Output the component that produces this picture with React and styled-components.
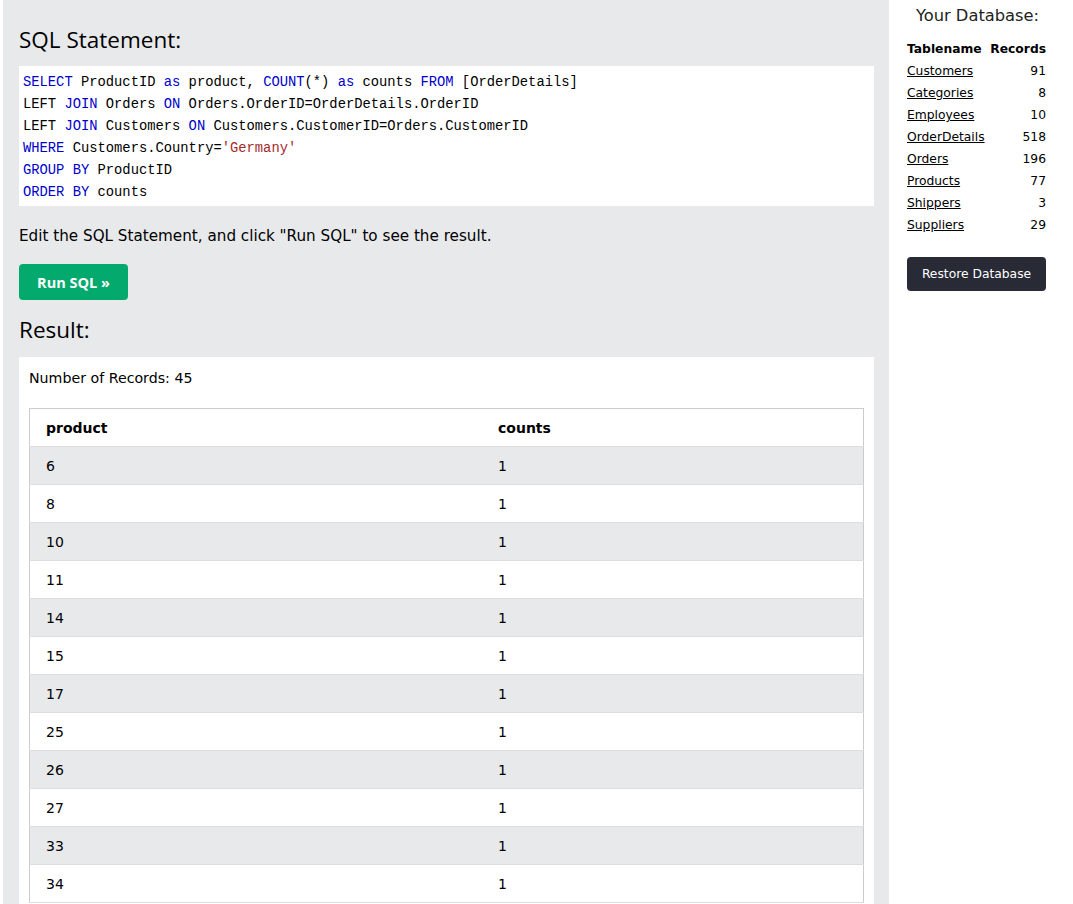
import React from 'react';
import styled, { createGlobalStyle } from 'styled-components';

const GlobalStyle = createGlobalStyle`
  html, body {
    margin: 0;
    padding: 0;
    background: #fff;
  }
  body {
    font-family: "DejaVu Sans", Verdana, sans-serif;
    color: #000;
    overflow: hidden;
  }
`;

const Page = styled.div`
  display: flex;
  height: 904px;
  padding-left: 3px;
  background: #fff;
`;

const Main = styled.div`
  width: 886px;
  flex-shrink: 0;
  background: #e7e9eb;
  padding: 0 15px 0 16px;
  box-sizing: border-box;
  overflow: hidden;
`;

const Heading = styled.h2`
  font-family: "Open Sans", "Segoe UI", sans-serif;
  font-weight: 400;
  font-size: 22.5px;
  line-height: 30px;
  margin: ${p => p.$top || 0}px 0 ${p => p.$bottom || 0}px;
  color: #000;
`;

const CodeBox = styled.div`
  background: #fff;
  padding: 6px 4px 2px;
  font-family: "Liberation Mono", "DejaVu Sans Mono", monospace;
  font-size: 13.8px;
  line-height: 22px;
  white-space: pre;
`;

const Kw = styled.span`
  color: mediumblue;
`;

const Str = styled.span`
  color: brown;
`;

const Note = styled.p`
  font-size: 15.2px;
  margin: 21px 0 0;
  line-height: 18px;
`;

const RunButton = styled.button`
  margin-top: 19px;
  display: block;
  width: 109px;
  height: 36px;
  border: none;
  border-radius: 4px;
  background: #04aa6d;
  color: #fff;
  font-family: "Open Sans", "Segoe UI", sans-serif;
  font-weight: 700;
  font-size: 14.5px;
  padding: 0;
`;

const ResultBox = styled.div`
  background: #fff;
  padding: 10px 10px;
`;

const Count = styled.div`
  font-size: 14.2px;
  line-height: 22px;
  margin-bottom: 19px;
`;

const DataTable = styled.table`
  width: 100%;
  border-collapse: collapse;
  border: 1px solid #ccc;
  font-size: 14px;
`;

const Th = styled.th`
  text-align: left;
  font-weight: 700;
  padding: 0 16px;
  height: 37px;
  border-bottom: 1px solid #ddd;
  width: ${p => p.$w || 'auto'};
`;

const Row = styled.tr`
  background: ${p => (p.$odd ? '#e7e9eb' : '#fff')};
  border-bottom: 1px solid #ddd;
`;

const Td = styled.td`
  padding: 0 16px;
  height: 37px;
`;

const Side = styled.div`
  flex: 1;
  padding: 0 27px 0 18px;
`;

const SideTitle = styled.div`
  font-size: 16.3px;
  text-align: center;
  color: #222;
  margin-top: 5px;
  line-height: 22px;
  padding-left: 2px;
`;

const DbTable = styled.table`
  width: 100%;
  margin-top: 11px;
  border-collapse: collapse;
  font-size: 12.3px;
`;

const DbTh = styled.th`
  font-weight: 700;
  text-align: ${p => (p.$right ? 'right' : 'left')};
  height: 22px;
  padding: 0;
`;

const DbTd = styled.td`
  text-align: ${p => (p.$right ? 'right' : 'left')};
  height: 22px;
  padding: 0;
`;

const DbLink = styled.a`
  color: #000;
  text-decoration: underline;
`;

const RestoreButton = styled.button`
  margin-top: 21px;
  width: 139px;
  height: 34px;
  border: none;
  border-radius: 4px;
  background: #282a35;
  color: #fff;
  font-family: "DejaVu Sans", Verdana, sans-serif;
  font-size: 12.3px;
  padding: 0;
`;

const rows = [6, 8, 10, 11, 14, 15, 17, 25, 26, 27, 33, 34];

const tables = [
  ['Customers', 91],
  ['Categories', 8],
  ['Employees', 10],
  ['OrderDetails', 518],
  ['Orders', 196],
  ['Products', 77],
  ['Shippers', 3],
  ['Suppliers', 29],
];

export default function App() {
  return (
    <>
      <GlobalStyle />
      <Page>
        <Main>
          <Heading $top={25} $bottom={11}>SQL Statement:</Heading>
          <CodeBox>
            <Kw>SELECT</Kw> ProductID <Kw>as</Kw> product, <Kw>COUNT</Kw>(*) <Kw>as</Kw> counts <Kw>FROM</Kw> [OrderDetails]{'\n'}
            LEFT <Kw>JOIN</Kw> Orders <Kw>ON</Kw> Orders.OrderID=OrderDetails.OrderID{'\n'}
            LEFT <Kw>JOIN</Kw> Customers <Kw>ON</Kw> Customers.CustomerID=Orders.CustomerID{'\n'}
            <Kw>WHERE</Kw> Customers.Country=<Str>'Germany'</Str>{'\n'}
            <Kw>GROUP</Kw> <Kw>BY</Kw> ProductID{'\n'}
            <Kw>ORDER</Kw> <Kw>BY</Kw> counts
          </CodeBox>
          <Note>Edit the SQL Statement, and click "Run SQL" to see the result.</Note>
          <RunButton>Run SQL »</RunButton>
          <Heading $top={15} $bottom={12}>Result:</Heading>
          <ResultBox>
            <Count>Number of Records: 45</Count>
            <DataTable>
              <thead>
                <tr>
                  <Th $w="420px">product</Th>
                  <Th>counts</Th>
                </tr>
              </thead>
              <tbody>
                {rows.map((r, i) => (
                  <Row key={r} $odd={i % 2 === 0}>
                    <Td>{r}</Td>
                    <Td>1</Td>
                  </Row>
                ))}
              </tbody>
            </DataTable>
          </ResultBox>
        </Main>
        <Side>
          <SideTitle>Your Database:</SideTitle>
          <DbTable>
            <thead>
              <tr>
                <DbTh>Tablename</DbTh>
                <DbTh $right>Records</DbTh>
              </tr>
            </thead>
            <tbody>
              {tables.map(([name, n]) => (
                <tr key={name}>
                  <DbTd><DbLink href="#">{name}</DbLink></DbTd>
                  <DbTd $right>{n}</DbTd>
                </tr>
              ))}
            </tbody>
          </DbTable>
          <RestoreButton>Restore Database</RestoreButton>
        </Side>
      </Page>
    </>
  );
}
